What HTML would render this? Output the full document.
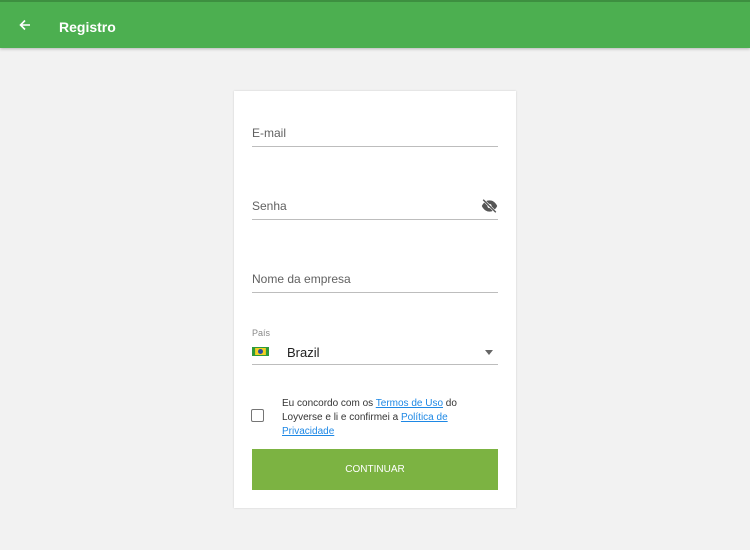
<!DOCTYPE html>
<html><head><style>
body{margin:0;width:750px;height:550px;background:#f2f2f2;font-family:"Liberation Sans",sans-serif;position:relative;overflow:hidden}
.hdr{position:absolute;left:0;top:0;width:750px;height:48px;background:#4caf50;border-top:2px solid #3d8f40;box-sizing:border-box;box-shadow:0 1px 3px rgba(0,0,0,.25)}
.hdr .t{position:absolute;left:59px;top:17px;color:#fff;font-size:14px;font-weight:bold}
.card{position:absolute;left:234px;top:91px;width:282px;height:417px;background:#fff;box-shadow:0 0 2px rgba(0,0,0,.15)}
.f{position:absolute;left:18px;width:246px;border-bottom:1px solid #bdbdbd;font-size:12px;color:#616161}
.lnk{color:#1e88e5;text-decoration:underline}
</style></head><body>
<div class="hdr">
<svg style="position:absolute;left:19px;top:17px" width="12" height="12" viewBox="0 0 12 12"><path d="M11 6H2M6 1.5L1.5 6 6 10.5" stroke="#fff" stroke-width="1.6" fill="none"/></svg>
<div class="t">Registro</div></div>
<div class="card">
<div class="f" style="top:35px;height:20px">E-mail</div>
<div class="f" style="top:108px;height:20px">Senha
<svg style="position:absolute;right:0;top:0" width="17" height="14" viewBox="0 0 24 20"><path d="M1 10C4 4 8 2 12 2s8 2 11 8c-3 6-7 8-11 8S4 16 1 10z" fill="#555"/><circle cx="12" cy="10" r="3" fill="#fff"/><path d="M3 1l18 18" stroke="#fff" stroke-width="3.5"/><path d="M3 1l18 18" stroke="#555" stroke-width="2"/></svg></div>
<div class="f" style="top:181px;height:20px">Nome da empresa</div>
<div style="position:absolute;left:18px;top:237px;font-size:9px;color:#888">País</div>
<div class="f" style="top:253px;height:20px;color:#222;font-size:13px">
<span style="position:absolute;left:0;top:3px;width:17px;height:9px;background:#2e9a3a"></span>
<span style="position:absolute;left:4px;top:4px;width:9px;height:7px;background:#f2d024;transform:scaleX(1.2)"></span>
<span style="position:absolute;left:6px;top:5px;width:5px;height:5px;border-radius:50%;background:#2a4fa0"></span>
<span style="position:absolute;left:35px;top:1px">Brazil</span>
<span style="position:absolute;right:5px;top:6px;border:4px solid transparent;border-top:5px solid #666"></span></div>
<div style="position:absolute;left:17px;top:318px;width:11px;height:11px;border:1.5px solid #757575;border-radius:2px"></div>
<div style="position:absolute;left:48px;top:306px;width:200px;font-size:10px;line-height:14px;color:#333">Eu concordo com os <span class="lnk">Termos de Uso</span> do Loyverse e li e confirmei a <span class="lnk">Política de Privacidade</span></div>
<div style="position:absolute;left:18px;top:358px;width:246px;height:41px;background:#7cb342;color:#fff;font-size:10px;text-align:center;line-height:42px">CONTINUAR</div>
</div>
</body></html>
